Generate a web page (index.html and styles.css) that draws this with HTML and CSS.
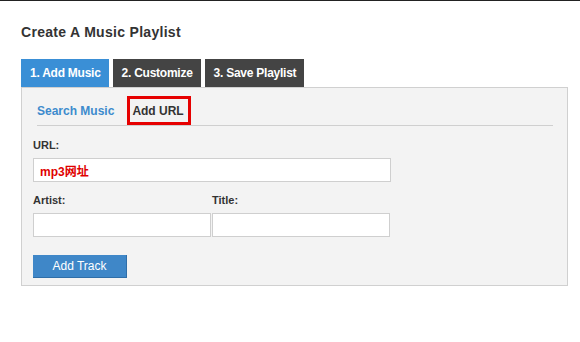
FILE: index.html
```html
<!DOCTYPE html>
<html lang="en">
<head>
  <meta charset="UTF-8">
  <title>Create A Music Playlist</title>
  <link rel="stylesheet" href="styles.css">
</head>
<body>
  <div class="page">
    <h1>Create A Music Playlist</h1>

    <div class="steps">
      <span class="step active">1. Add Music</span>
      <span class="step">2. Customize</span>
      <span class="step">3. Save Playlist</span>
    </div>

    <div class="panel">
      <div class="subtabs">
        <span class="subtab">Search Music</span>
        <span class="subtab current">Add URL</span>
      </div>

      <div class="form">
        <label for="url">URL:</label>
        <input type="text" id="url" class="url-input" value="mp3网址">

        <div class="row">
          <div class="field">
            <label for="artist">Artist:</label>
            <input type="text" id="artist">
          </div>
          <div class="field">
            <label for="title">Title:</label>
            <input type="text" id="title">
          </div>
        </div>

        <button class="add-btn">Add Track</button>
      </div>
    </div>
  </div>
</body>
</html>
```

FILE: styles.css
```css
body {
  margin: 0;
  border-top: 1px solid #222;
  background: #fff;
  font-family: "Liberation Sans", Arial, sans-serif;
  color: #333;
}
.page {
  padding: 23px 12px 0 21px;
}
h1 {
  margin: 0 0 19px;
  font-size: 14px;
  line-height: 16px;
  font-weight: bold;
  color: #333;
  letter-spacing: 0.3px;
}
.steps {
  display: flex;
  gap: 4px;
}
.step {
  display: block;
  height: 28px;
  line-height: 28px;
  padding: 0 8px 0 9px;
  background: #444;
  color: #fff;
  font-size: 12px;
  font-weight: bold;
  letter-spacing: -0.25px;
}
.step.active {
  background: #3a8fd6;
}
.panel {
  background: #f3f3f3;
  border: 1px solid #d0d0d0;
  padding-bottom: 7px;
}
.subtabs {
  display: flex;
  align-items: flex-end;
  gap: 13px;
  margin: 8px 14px 0 15px;
  border-bottom: 1px solid #cfcfcf;
}
.subtab {
  display: block;
  font-size: 12px;
  font-weight: bold;
  line-height: 22px;
  padding: 4px 0 3px;
  color: #3d8bcd;
}
.subtab.current {
  color: #333;
  border: 3px solid #e60000;
  padding: 1px 4px 0 2px;
}
.form {
  padding: 13px 0 0 11px;
}
.form label {
  display: block;
  font-size: 11px;
  font-weight: bold;
  line-height: 13px;
  margin-bottom: 6px;
  color: #333;
}
.form input {
  display: block;
  box-sizing: border-box;
  height: 24px;
  border: 1px solid #cfcfcf;
  background: #fff;
  padding: 0 6px;
  font-family: "Liberation Sans", "Noto Sans CJK SC", sans-serif;
  font-size: 12px;
  outline: none;
}
.url-input {
  width: 358px;
  color: #e00000;
  font-weight: bold;
}
.row {
  display: flex;
  gap: 1px;
  margin-top: 12px;
}
.field input {
  width: 178px;
}
.add-btn {
  display: block;
  margin-top: 18px;
  width: 94px;
  height: 23px;
  background: #3f87c8;
  border: none;
  border-right: 1px solid #2f6ea8;
  border-bottom: 1px solid #2f6ea8;
  color: #fff;
  font-family: "Liberation Sans", Arial, sans-serif;
  font-size: 12px;
  padding: 0;
  cursor: pointer;
}
```
